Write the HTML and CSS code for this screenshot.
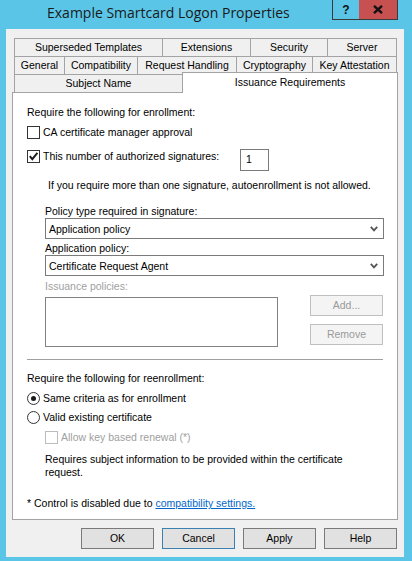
FILE: index.html
```html
<!DOCTYPE html>
<html>
<head>
<meta charset="utf-8">
<title>Example Smartcard Logon Properties</title>
<link rel="stylesheet" href="styles.css">
</head>
<body>
<div class="titlebar">
  <div class="title">Example Smartcard Logon Properties</div>
  <div class="caption-btns">
    <div class="cbtn help">?</div>
    <div class="cbtn close">
      <svg width="10" height="9" viewBox="0 0 10 9"><path d="M1 0.8 L9 8.2 M9 0.8 L1 8.2" stroke="#111" stroke-width="2.3" fill="none"/></svg>
    </div>
  </div>
</div>
<div class="client">
  <div class="tabs">
    <div class="tabrow">
      <div class="tab w148">Superseded Templates</div>
      <div class="tab w88">Extensions</div>
      <div class="tab w77">Security</div>
      <div class="tab w70 last">Server</div>
    </div>
    <div class="tabrow">
      <div class="tab w50">General</div>
      <div class="tab w73">Compatibility</div>
      <div class="tab w99">Request Handling</div>
      <div class="tab w76">Cryptography</div>
      <div class="tab w85 last">Key Attestation</div>
    </div>
    <div class="tabrow r3">
      <div class="tab w168">Subject Name</div>
      <div class="tab selected">Issuance Requirements</div>
    </div>
  </div>
  <div class="panel">
    <div class="line h-enroll">Require the following for enrollment:</div>
    <div class="check row-ca"><span class="cb"></span><span>CA certificate manager approval</span></div>
    <div class="sig-row">
      <div class="check sig-label"><span class="cb"><svg width="11" height="11" viewBox="0 0 11 11"><path d="M1.8 5.2 L4.3 8.2 L9.4 1.8" stroke="#1a1a1a" stroke-width="1.9" fill="none"/></svg></span><span>This number of authorized signatures:</span></div>
      <div class="num">1</div>
    </div>
    <div class="line note">If you require more than one signature, autoenrollment is not allowed.</div>
    <div class="indent">
      <div class="line lbl-policy">Policy type required in signature:</div>
      <div class="select"><span>Application policy</span><svg width="8" height="6" viewBox="0 0 8 6"><path d="M0.8 0.8 L4 4.4 L7.2 0.8" stroke="#555" stroke-width="1.8" fill="none"/></svg></div>
      <div class="line lbl-app">Application policy:</div>
      <div class="select"><span>Certificate Request Agent</span><svg width="8" height="6" viewBox="0 0 8 6"><path d="M0.8 0.8 L4 4.4 L7.2 0.8" stroke="#555" stroke-width="1.8" fill="none"/></svg></div>
      <div class="line lbl-iss disabled">Issuance policies:</div>
      <div class="iss-row">
        <div class="listbox"></div>
        <div class="side-btns">
          <div class="btn btn-disabled">Add...</div>
          <div class="btn btn-disabled">Remove</div>
        </div>
      </div>
    </div>
    <div class="separator"></div>
    <div class="line h-reenroll">Require the following for reenrollment:</div>
    <div class="check row-r1"><span class="radio on"></span><span>Same criteria as for enrollment</span></div>
    <div class="check row-r2"><span class="radio"></span><span>Valid existing certificate</span></div>
    <div class="check row-dis disabled"><span class="cb cb-dis"></span><span>Allow key based renewal (*)</span></div>
    <div class="para">Requires subject information to be provided within the certificate request.</div>
    <div class="line footer">* Control is disabled due to <a class="link" href="#">compatibility settings.</a></div>
  </div>
  <div class="buttons">
    <div class="btn dlg">OK</div>
    <div class="btn dlg focused">Cancel</div>
    <div class="btn dlg">Apply</div>
    <div class="btn dlg">Help</div>
  </div>
</div>
</body>
</html>
```

FILE: styles.css
```css
* { box-sizing: border-box; }
html, body { margin: 0; padding: 0; }
body {
  width: 412px;
  height: 561px;
  overflow: hidden;
  background: #5bc5e8;
  font-family: "Liberation Sans", Arial, sans-serif;
  font-size: 10.5px;
  color: #000;
}

/* title bar */
.titlebar { display: flex; height: 29px; }
.title {
  flex: none;
  width: 332px;
  padding: 3px 0 0 47px;
  font-family: "Open Sans", "Noto Sans", sans-serif;
  font-size: 14px;
  line-height: 20px;
  color: #1a1a1a;
  white-space: nowrap;
}
.caption-btns {
  display: flex;
  width: 66px;
  height: 20px;
  border: 1px solid #3a3a3a;
  border-top: none;
}
.cbtn { display: flex; align-items: center; justify-content: center; height: 100%; }
.help { width: 26px; font-weight: bold; font-size: 12px; color: #111; }
.close { flex: 1; background: #c75050; }

/* client */
.client {
  margin-left: 6px;
  width: 398px;
  height: 528px;
  background: #f0f0f0;
  padding: 9px 6px 0 6px;
}

/* tabs */
.tabs { padding-left: 2px; }
.tabrow { display: flex; height: 18px; }
.tab {
  height: 18px;
  border-top: 1px solid #a3a3a3;
  border-left: 1px solid #a3a3a3;
  background: #f0f0f0;
  text-align: center;
  line-height: 17px;
  white-space: nowrap;
}
.tab.last { border-right: 1px solid #a3a3a3; }
.w148 { width: 148px; }
.w88 { width: 88px; }
.w77 { width: 77px; }
.w70 { width: 70px; }
.w50 { width: 50px; }
.w73 { width: 73px; }
.w99 { width: 99px; }
.w76 { width: 76px; }
.w85 { width: 85px; }
.w168 { width: 168px; }
.tabrow.r3 { align-items: flex-end; }
.tab.selected {
  position: relative;
  z-index: 1;
  width: 216px;
  height: 21px;
  margin-bottom: -1px;
  background: #fff;
  border-right: 1px solid #a3a3a3;
  line-height: 18px;
}

/* panel */
.panel {
  height: 428px;
  border: 1px solid #a3a3a3;
  background: #fff;
  padding-left: 14px;
}
.line { height: 13px; line-height: 13px; white-space: nowrap; }
.disabled { color: #a0a0a0; }
.h-enroll { margin-top: 13px; }
.check {
  display: flex;
  align-items: center;
  gap: 3px;
  height: 13px;
  line-height: 13px;
  white-space: nowrap;
}
.cb {
  flex: none;
  width: 13px;
  height: 13px;
  border: 1px solid #333;
  background: #fff;
  display: flex;
  align-items: center;
  justify-content: center;
}
.cb-dis { border-color: #bcbcbc; background: #fff; }
.radio {
  flex: none;
  width: 13px;
  height: 13px;
  border: 1px solid #333;
  border-radius: 50%;
  background: #fff;
  display: flex;
  align-items: center;
  justify-content: center;
}
.radio.on::after {
  content: "";
  width: 5px;
  height: 5px;
  border-radius: 50%;
  background: #1a1a1a;
}
.row-ca { margin-top: 7px; }
.sig-row { display: flex; align-items: flex-start; margin-top: 10px; height: 22px; }
.sig-label { width: 213px; margin-top: 1px; }
.num {
  width: 29px;
  height: 22px;
  border: 1px solid #7a7a7a;
  background: #fff;
  padding-left: 5px;
  line-height: 18px;
}
.note { margin-top: 8px; margin-left: 21px; }
.indent { margin-left: 18px; }
.lbl-policy { margin-top: 13px; }
.select {
  display: flex;
  align-items: center;
  justify-content: space-between;
  width: 339px;
  height: 21px;
  border: 1px solid #7a7a7a;
  background: #fff;
  padding: 0 5px 0 3px;
  white-space: nowrap;
}
.lbl-app { margin-top: 3px; }
.lbl-iss { margin-top: 4px; }
.iss-row { display: flex; align-items: flex-start; margin-top: 2px; }
.listbox {
  width: 233px;
  height: 50px;
  margin-top: 2px;
  border: 1px solid #828282;
  background: #fff;
}
.side-btns { display: flex; flex-direction: column; gap: 8px; margin-left: 32px; }
.btn {
  width: 73px;
  height: 21px;
  text-align: center;
  line-height: 19px;
  white-space: nowrap;
}
.btn-disabled { border: 1px solid #bfbfbf; background: #f4f4f4; color: #9a9a9a; }
.separator { width: 356px; height: 1px; margin-top: 12px; background: #a0a0a0; }
.h-reenroll { margin-top: 12px; }
.row-r1 { margin-top: 7px; }
.row-r2 { margin-top: 6px; }
.row-dis { margin-top: 7px; margin-left: 18px; }
.para { margin-top: 9px; margin-left: 18px; width: 310px; line-height: 13px; }
.footer { margin-top: 18px; }
.link { color: #0066cc; text-decoration: underline; }

/* dialog buttons */
.buttons {
  display: flex;
  justify-content: flex-end;
  gap: 8px;
  margin-top: 8px;
  padding-right: 1px;
}
.dlg { border: 1px solid #7a7a7a; background: #e1e1e1; }
.dlg.focused { border-color: #3c7fb1; }
```
